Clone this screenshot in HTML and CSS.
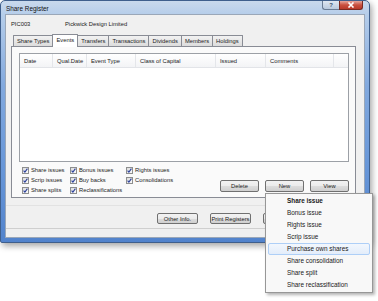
FILE: index.html
```html
<!DOCTYPE html>
<html lang="en">
<head>
  <meta charset="UTF-8">
  <title>Share Register</title>
  <link rel="stylesheet" href="styles.css">
</head>
<body>
  <div class="window">
    <div class="titlebar">
      <span class="title">Share Register</span>
      <div class="caption-buttons">
        <span class="cap-btn help">?</span>
        <span class="cap-btn close">
          <svg width="8" height="6" viewBox="0 0 8 6"><path d="M1.5 0.5 L6.5 5.5 M6.5 0.5 L1.5 5.5" stroke="#fff" stroke-width="1.6"/></svg>
        </span>
      </div>
    </div>

    <div class="client">
      <div class="info-row">
        <span class="code">PIC003</span>
        <span>Pickwick Design Limited</span>
      </div>

      <div class="tabs">
        <span class="tab">Share Types</span>
        <span class="tab active">Events</span>
        <span class="tab">Transfers</span>
        <span class="tab">Transactions</span>
        <span class="tab">Dividends</span>
        <span class="tab">Members</span>
        <span class="tab">Holdings</span>
      </div>

      <div class="tab-panel">
        <div class="list">
          <div class="list-header">
            <span class="col c-date">Date</span>
            <span class="col c-qual">Qual.Date</span>
            <span class="col c-type">Event Type</span>
            <span class="col c-class">Class of Capital</span>
            <span class="col c-issued">Issued</span>
            <span class="col c-comments">Comments</span>
          </div>
        </div>

        <div class="filters">
          <div class="checks">
            <label class="check"><span class="box"><svg width="5" height="5" viewBox="0 0 5 5"><path d="M0.6 2.6 L1.9 4.1 L4.4 0.6" fill="none" stroke="#2a3f9a" stroke-width="1.1"/></svg></span>Share issues</label>
            <label class="check"><span class="box"><svg width="5" height="5" viewBox="0 0 5 5"><path d="M0.6 2.6 L1.9 4.1 L4.4 0.6" fill="none" stroke="#2a3f9a" stroke-width="1.1"/></svg></span>Bonus issues</label>
            <label class="check"><span class="box"><svg width="5" height="5" viewBox="0 0 5 5"><path d="M0.6 2.6 L1.9 4.1 L4.4 0.6" fill="none" stroke="#2a3f9a" stroke-width="1.1"/></svg></span>Rights issues</label>
            <label class="check"><span class="box"><svg width="5" height="5" viewBox="0 0 5 5"><path d="M0.6 2.6 L1.9 4.1 L4.4 0.6" fill="none" stroke="#2a3f9a" stroke-width="1.1"/></svg></span>Scrip issues</label>
            <label class="check"><span class="box"><svg width="5" height="5" viewBox="0 0 5 5"><path d="M0.6 2.6 L1.9 4.1 L4.4 0.6" fill="none" stroke="#2a3f9a" stroke-width="1.1"/></svg></span>Buy backs</label>
            <label class="check"><span class="box"><svg width="5" height="5" viewBox="0 0 5 5"><path d="M0.6 2.6 L1.9 4.1 L4.4 0.6" fill="none" stroke="#2a3f9a" stroke-width="1.1"/></svg></span>Consolidations</label>
            <label class="check"><span class="box"><svg width="5" height="5" viewBox="0 0 5 5"><path d="M0.6 2.6 L1.9 4.1 L4.4 0.6" fill="none" stroke="#2a3f9a" stroke-width="1.1"/></svg></span>Share splits</label>
            <label class="check"><span class="box"><svg width="5" height="5" viewBox="0 0 5 5"><path d="M0.6 2.6 L1.9 4.1 L4.4 0.6" fill="none" stroke="#2a3f9a" stroke-width="1.1"/></svg></span>Reclassifications</label>
          </div>
          <div class="list-buttons">
            <button class="btn">Delete</button>
            <button class="btn">New</button>
            <button class="btn">View</button>
          </div>
        </div>
      </div>

      <div class="footer">
        <button class="btn wide">Other Info.</button>
        <button class="btn wide">Print Registers</button>
        <button class="btn wide">Close</button>
      </div>
      <div class="status"></div>
    </div>
  </div>

  <div class="menu">
    <div class="menu-item default">Share issue</div>
    <div class="menu-item">Bonus issue</div>
    <div class="menu-item">Rights issue</div>
    <div class="menu-item">Scrip issue</div>
    <div class="menu-item hover">Purchase own shares</div>
    <div class="menu-item">Share consolidation</div>
    <div class="menu-item">Share split</div>
    <div class="menu-item">Share reclassification</div>
  </div>
</body>
</html>
```

FILE: styles.css
```css
body {
  margin: 0;
  width: 378px;
  height: 301px;
  background-color: #ffffff;
  font-family: "Liberation Sans", Arial, sans-serif;
  font-size: 5.8px;
  color: #1a1a1a;
  overflow: hidden;
}

.window {
  width: 370px;
  height: 243px;
  box-sizing: border-box;
  border: 1px solid #3f5f8c;
  border-radius: 5px 5px 2px 2px;
  padding: 0 4px 4px 4px;
  background: linear-gradient(to bottom, #c9d9ec 0, #b5cdea 14px, #82a9de 35%, #6796d8 70%, #5283cc 100%);
  box-shadow: 2px 3px 6px rgba(0, 0, 0, 0.35);
  display: flex;
  flex-direction: column;
}

.titlebar {
  height: 13px;
  display: flex;
  align-items: flex-start;
  justify-content: space-between;
}

.title {
  font-size: 6.4px;
  padding: 4px 0 0 1px;
  color: #111;
}

.caption-buttons {
  display: flex;
  margin-right: 2px;
}

.cap-btn {
  height: 8px;
  display: flex;
  align-items: center;
  justify-content: center;
  border: 1px solid #6a7c94;
  border-top: none;
}

.help {
  width: 16px;
  border-radius: 0 0 0 3px;
  border-right: none;
  background: linear-gradient(to bottom, #dfe7f1, #b9c9dd);
  color: #3c4f6b;
  font-size: 6px;
  font-weight: bold;
}

.close {
  width: 22px;
  border-radius: 0 0 3px 0;
  border-color: #7a2a22;
  background: linear-gradient(to bottom, #e6a79e, #c9503f 50%, #b83a2a);
}

.client {
  flex: 1;
  background-color: #f0f0f0;
  border: 1px solid #9aa7b8;
  box-sizing: border-box;
  display: flex;
  flex-direction: column;
}

.info-row {
  height: 12px;
  margin-top: 3px;
  padding-left: 5px;
  display: flex;
  align-items: center;
}

.code {
  width: 54px;
}

.tabs {
  height: 13px;
  margin-top: 3px;
  padding-left: 7px;
  display: flex;
  align-items: flex-end;
  position: relative;
  z-index: 1;
}

.tab {
  height: 10px;
  line-height: 10px;
  padding: 0 3px;
  margin-right: -1px;
  border: 1px solid #898c95;
  border-bottom: none;
  border-radius: 1px 1px 0 0;
  background: linear-gradient(to bottom, #f2f2f2, #dcdcdc);
}

.tab.active {
  height: 12px;
  line-height: 11px;
  padding: 0 3px;
  margin: 0 -1px 0 0;
  background: #ffffff;
  position: relative;
  top: 1px;
  z-index: 2;
}

.tab-panel {
  height: 152px;
  box-sizing: border-box;
  margin: 0 8px 0 5px;
  border: 1px solid #898c95;
  background-color: #fafafa;
  padding: 6px 6px 0 7px;
  display: flex;
  flex-direction: column;
}

.list {
  height: 109px;
  box-sizing: border-box;
  border: 1px solid #9ca0a6;
  background-color: #ffffff;
}

.list-header {
  height: 13px;
  display: flex;
  border-bottom: 1px solid #e2e4e8;
  background: linear-gradient(to bottom, #ffffff, #f3f4f6);
}

.col {
  padding-left: 4px;
  line-height: 14px;
  box-sizing: border-box;
  border-right: 1px solid #e4e6ea;
}

.c-date { width: 33px; }
.c-qual { width: 34px; }
.c-type { width: 49px; }
.c-class { width: 80px; }
.c-issued { width: 50px; }
.c-comments { width: 68px; }

.filters {
  display: flex;
  justify-content: space-between;
  align-items: flex-end;
  padding-top: 3px;
}

.checks {
  display: grid;
  grid-template-columns: 48px 56px 60px;
  grid-auto-rows: 10px;
  padding-left: 3px;
}

.check {
  display: flex;
  align-items: center;
}

.box {
  width: 5px;
  height: 5px;
  margin-right: 2px;
  border: 1px solid #8e8f8f;
  background: linear-gradient(to bottom right, #dcdcdc, #fbfbfb);
  display: flex;
}

.list-buttons {
  display: flex;
  gap: 6px;
  margin-bottom: 3px;
}

.btn {
  width: 39px;
  height: 12px;
  padding: 0;
  font-family: inherit;
  font-size: 5.8px;
  color: #1a1a1a;
  border: 1px solid #707070;
  border-radius: 2px;
  background: linear-gradient(to bottom, #f2f2f2 0, #ebebeb 50%, #dddddd 51%, #cfcfcf 100%);
}

.footer {
  margin-top: 7px;
  padding: 7px 0 0 151px;
  border-top: 1px solid #e2e2e2;
  display: flex;
  gap: 12px;
  height: 10px;
}

.btn.wide {
  width: 41px;
  height: 11px;
}

.status {
  margin-top: 5px;
  border-top: 1px solid #cfcfcf;
  flex: 1;
}

.menu {
  position: absolute;
  left: 265px;
  top: 193px;
  width: 108px;
  height: 100px;
  box-sizing: border-box;
  padding-top: 1px;
  background-color: #f8f8f8;
  border: 1px solid #979797;
  box-shadow: 2px 2px 3px rgba(0, 0, 0, 0.3);
  font-size: 6.4px;
}

.menu-item {
  height: 12px;
  line-height: 12px;
  padding-left: 19px;
  margin: 0 2px;
  box-sizing: border-box;
}

.menu-item.default {
  font-weight: bold;
}

.menu-item.hover {
  border: 1px solid #aecff7;
  border-radius: 2px;
  line-height: 10px;
  padding-left: 18px;
  background: linear-gradient(to bottom, #f2f7fd, #e3edfa);
}
```
